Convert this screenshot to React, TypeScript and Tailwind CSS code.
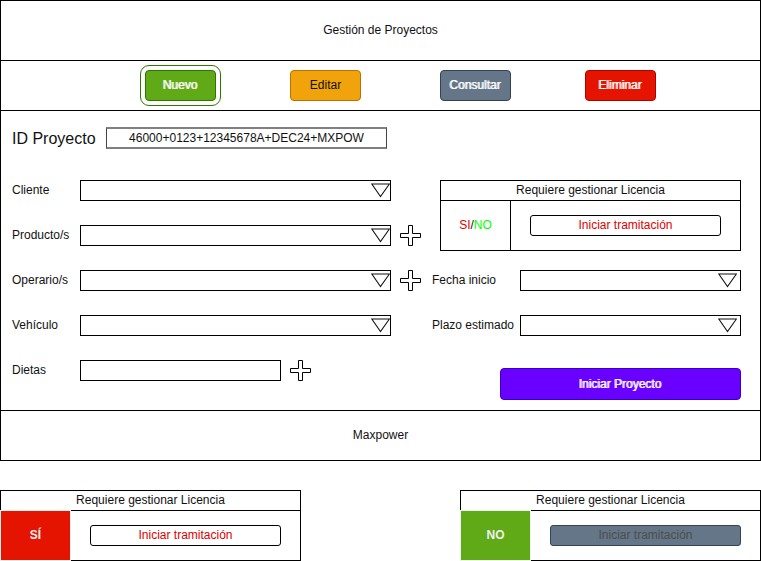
import type { ReactNode } from "react";

function Plus() {
  return (
    <svg width="21" height="21" viewBox="0 0 21 21" fill="none" stroke="#000" aria-hidden="true">
      <path d="M.5 8.5h8v-8h4v8h8v4h-8v8h-4v-8h-8z" strokeLinejoin="round" />
    </svg>
  );
}

function AddButton({ label }: { label: string }) {
  return (
    <button type="button" aria-label={label} className="shrink-0">
      <Plus />
    </button>
  );
}

function SelectBox({ id, inset }: { id: string; inset?: boolean }) {
  return (
    <div className="relative min-w-0 flex-1">
      <select id={id} className="block h-[21px] w-full appearance-none border border-black bg-white px-1 text-xs" />
      <svg
        className={inset ? "pointer-events-none absolute top-[3px] right-1" : "pointer-events-none absolute top-[3px] right-px"}
        width="19"
        height="15"
        viewBox="0 0 19 15"
        fill="#fff"
        stroke="#111"
        strokeWidth="1.1"
        aria-hidden="true"
      >
        <path d="M.8 1h17.6L9.5 13.5z" />
      </svg>
    </div>
  );
}

function Row({ id, label, wide, children }: { id: string; label: string; wide?: boolean; children: ReactNode }) {
  return (
    <div className="flex h-[21px] items-center">
      <label htmlFor={id} className={wide ? "w-[88px] shrink-0 pb-px" : "w-[68px] shrink-0 pb-px"}>
        {label}
      </label>
      {children}
    </div>
  );
}

function LicenseCard({
  status,
  statusClass,
  buttonClass,
  disabled,
}: {
  status: ReactNode;
  statusClass: string;
  buttonClass: string;
  disabled?: boolean;
}) {
  return (
    <section className="w-[301px] bg-white">
      <h2 className="flex h-[21px] items-center justify-center border border-black pb-px">
        Requiere gestionar Licencia
      </h2>
      <div className="-mt-px flex h-[51px]">
        <div className={"z-10 flex w-[71px] shrink-0 items-center justify-center border pb-px " + statusClass}>
          {status}
        </div>
        <div className="-ml-px flex flex-1 items-center border border-black px-[19px]">
          <button
            type="button"
            disabled={disabled}
            className={"h-[21px] w-full rounded-[3px] border pb-px " + buttonClass}
          >
            Iniciar tramitación
          </button>
        </div>
      </div>
    </section>
  );
}

const action = "h-[31px] w-[71px] rounded-[4px] border pb-px ";
const strong = "text-white [text-shadow:-1px_0_0_rgb(255_255_255/0.8)] ";

export default function App() {
  return (
    <div className="bg-white font-['Liberation_Sans',Arial,sans-serif] text-xs text-[#111]">
      <main className="border border-black">
        <header className="flex h-[59px] items-center justify-center pb-px">
          <h1>Gestión de Proyectos</h1>
        </header>
        <nav className="flex h-[51px] items-center justify-center gap-[79px] border-y border-black pl-10">
          <div className="flex gap-[74px]">
            <button
              type="button"
              className={action + strong + "border-[#2d7600] bg-[#60a917] outline-1 outline-offset-4 outline-[#2d7600]"}
            >
              Nuevo
            </button>
            <button type="button" className={action + "border-[#bd7000] bg-[#f0a30a]"}>
              Editar
            </button>
          </div>
          <div className="flex gap-[74px]">
            <button type="button" className={action + strong + "border-[#314354] bg-[#647687]"}>
              Consultar
            </button>
            <button type="button" className={action + strong + "border-[#b20000] bg-[#e51400]"}>
              Eliminar
            </button>
          </div>
        </nav>

        <form className="pt-4 pr-[19px] pb-[10px] pl-[11px]">
          <div className="flex items-start">
            <label htmlFor="project-id" className="w-[94px] text-base leading-6">
              ID Proyecto
            </label>
            <input
              id="project-id"
              readOnly
              value="46000+0123+12345678A+DEC24+MXPOW"
              className="h-[22px] w-[281px] border-x border-y-2 border-x-[#444] border-y-[#808080] text-center"
            />
          </div>

          <div className="mt-[29px] flex gap-[11px]">
            <div className="flex flex-1 flex-col gap-6">
              <Row id="client" label="Cliente">
                <SelectBox id="client" />
                <span className="w-[30px]" />
              </Row>
              <Row id="product" label="Producto/s">
                <SelectBox id="product" />
                <span className="w-[9px]" />
                <AddButton label="Añadir producto" />
              </Row>
              <Row id="operator" label="Operario/s">
                <SelectBox id="operator" />
                <span className="w-[9px]" />
                <AddButton label="Añadir operario" />
              </Row>
              <Row id="vehicle" label="Vehículo">
                <SelectBox id="vehicle" />
                <span className="w-[30px]" />
              </Row>
              <Row id="allowance" label="Dietas">
                <input id="allowance" className="h-[21px] w-[201px] border border-black px-1" />
                <span className="w-[9px]" />
                <AddButton label="Añadir dieta" />
              </Row>
            </div>

            <div className="flex w-[309px] flex-col">
              <div className="flex justify-end">
                <LicenseCard
                  status={
                    <>
                      <span className="text-[#dd0000]">SI</span>/<span className="text-[#00ff00]">NO</span>
                    </>
                  }
                  statusClass="border-black"
                  buttonClass="border-black text-[#dd0000]"
                />
              </div>
              <div className="mt-[19px] flex flex-col gap-6">
                <Row id="start" label="Fecha inicio" wide>
                  <SelectBox id="start" inset />
                </Row>
                <Row id="term" label="Plazo estimado" wide>
                  <SelectBox id="term" inset />
                </Row>
              </div>
              <button
                type="button"
                className={strong + "mt-8 h-8 w-[241px] self-end rounded-[4px] border border-[#3700cc] bg-[#6a00ff]"}
              >
                Iniciar Proyecto
              </button>
            </div>
          </div>
        </form>

        <footer className="flex h-[50px] items-center justify-center border-t border-black pb-px">Maxpower</footer>
      </main>

      <div className="mt-[29px] flex justify-between">
        <LicenseCard
          status="SÍ"
          statusClass="border-[#f0f0f0] bg-[#e51400] font-bold text-[#f0f0f0]"
          buttonClass="border-black text-[#dd0000]"
        />
        <LicenseCard
          status="NO"
          statusClass="border-[#f0f0f0] bg-[#60a917] font-bold text-[#f0f0f0]"
          buttonClass="border-[#314354] bg-[#647687] text-[#4d4d4d]"
          disabled
        />
      </div>
    </div>
  );
}
